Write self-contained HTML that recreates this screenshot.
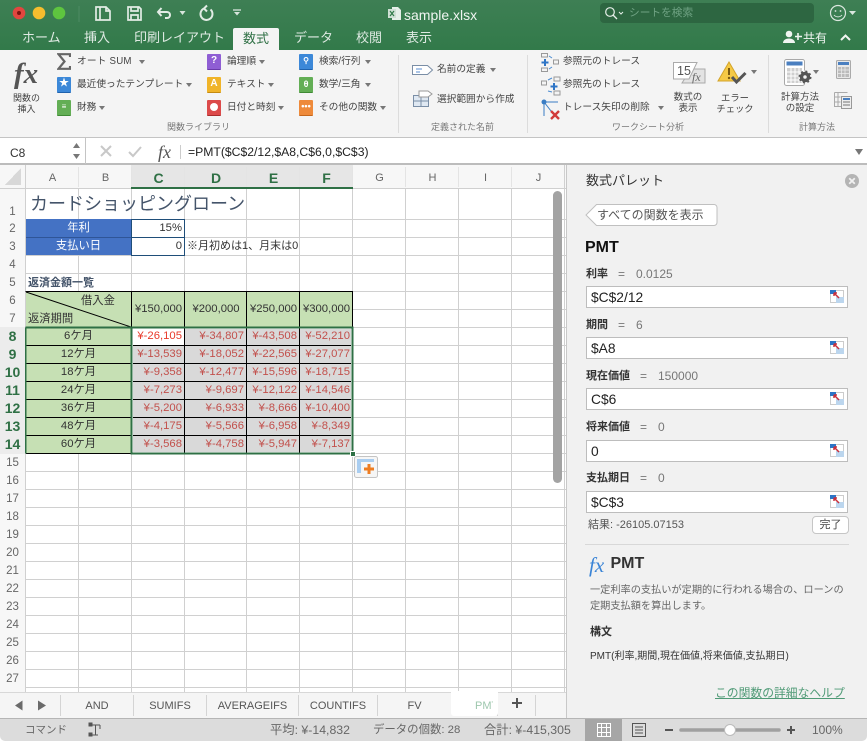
<!DOCTYPE html>
<html lang="ja"><head><meta charset="utf-8"><title>sample.xlsx</title>
<style>
*{box-sizing:border-box}
html,body{margin:0;padding:0;width:867px;height:741px;overflow:hidden;background:#fff}
body{font-family:"Liberation Sans","Noto Sans CJK JP",sans-serif;font-size:11px;color:#333;position:relative}
.a{position:absolute}
.t{position:absolute;white-space:nowrap;line-height:14px;height:14px}
.k{font-size:9.7px;color:#444}
.r{position:absolute;height:18px;line-height:18px;white-space:nowrap;text-align:right;padding-right:2px;font-size:11.3px}
.c{text-align:center;padding:0}
.tab{position:absolute;top:31px;line-height:14px;font-size:13px;color:#dfeae3;white-space:nowrap}
.lb{position:absolute;line-height:14px;font-size:9px;color:#777;white-space:nowrap}
.tri{position:absolute;width:0;height:0;border-left:3.5px solid transparent;border-right:3.5px solid transparent;border-top:4.500px solid #777}
.ic{position:absolute;width:14px;height:16px;border-radius:1px;color:#fff;text-align:center;font-size:10px;line-height:14px;font-weight:bold}
.h{position:absolute;top:168px;height:20px;line-height:20px;text-align:center;color:#666;font-size:11px}
.hs{color:#2f7045;font-weight:bold;font-size:14px}
.n{position:absolute;left:0;width:25px;text-align:center;height:18px;line-height:20px;color:#666;font-size:11.5px}
.ns{color:#2f7045;font-weight:bold;font-size:14px;line-height:18px}
.inp{position:absolute;left:586px;width:262px;height:22px;background:#fff;border:1px solid #bdbdbd;font-size:13.8px;line-height:21px;padding-left:4px;color:#222}
.pl{position:absolute;left:586px;font-weight:bold;font-size:11px;line-height:14px;color:#333;white-space:nowrap}
.pe{position:absolute;line-height:14px;font-size:12px;color:#777;white-space:nowrap}
.st{position:absolute;top:692px;height:26px;line-height:29px;text-align:center;font-size:11px;color:#555}
.sv{position:absolute;top:723px;line-height:14px;color:#666;font-size:12.3px;white-space:nowrap}
</style></head><body>

<!-- Title bar -->
<div class="a" style="left:0;top:0;width:867px;height:50px;background:linear-gradient(#3e7f54,#327a4a)"></div>
<svg class="a" style="left:0;top:0" width="867" height="50" fill="none">
<circle cx="19" cy="13" r="6.3" fill="#e2463f"/><circle cx="19" cy="13" r="2" fill="#7c1410"/>
<circle cx="39" cy="13" r="6.3" fill="#f5bd2e"/><circle cx="59" cy="13" r="6.3" fill="#5ec53f"/>
<path d="M79 6V22" stroke="#4d8b63"/>
<g stroke="#e2ece5" stroke-width="1.700">
<path d="M96 7h10l4 4v9H96zM100 7v13M106 7v4h4"/>
<path d="M128 7h11l2 2v11h-13zM131 7v4h7V7M131 20v-5h7v5"/>
<path d="M161.500 8l-3.500 4 3.500 4M158 12h9c4 0 4 6 0 6h-2" stroke-width="2"/>
<path d="M210.500 9.500A6 6 0 1 1 204 8.500M207 5.500l-3 3 3 3" stroke-width="2"/>
</g>
<path d="M179.500 11h6l-3 4zM234 12h6l-3 3.500z" fill="#d8e5dc"/><path d="M233 10h8" stroke="#d8e5dc" stroke-width="1.300"/>
<rect x="600" y="3" width="214" height="20" rx="4" fill="#2d6641"/>
<circle cx="610" cy="12" r="4.300" stroke="#e6efe9" stroke-width="1.200"/><path d="M613 15l4 4" stroke="#e6efe9" stroke-width="1.300"/><path d="M619 12l2 2 2-2" stroke="#e6efe9"/>
<circle cx="838" cy="13" r="7.500" stroke="#dbe7df" stroke-width="1.200"/><circle cx="835.500" cy="11" r=".9" fill="#dbe7df"/><circle cx="840.500" cy="11" r=".9" fill="#dbe7df"/><path d="M834 15c2 2.500 6 2.500 8 0" stroke="#dbe7df"/>
<path d="M849 11h7l-3.500 4z" fill="#dbe7df"/>
<path d="M392 7h6l3 3v10h-9z" fill="#e6efe9"/><rect x="388" y="9" width="8" height="9" fill="#cfe0d5"/><path d="M390 11l4 5M394 11l-4 5" stroke="#327a4a" stroke-width="1.200"/>
<circle cx="789" cy="34" r="3.300" fill="#f0f5f1"/><path d="M783 43c0-6 12-6 12 0z" fill="#f0f5f1"/><path d="M798 33v7M795 36.500h7" stroke="#f0f5f1" stroke-width="1.600"/>
<path d="M841 40l4.500-4.500L850 40" stroke="#f0f5f1" stroke-width="2"/>
</svg>
<div class="t" style="left:404px;top:8px;font-size:14px;color:#f0f5f1">sample.xlsx</div>
<div class="t" style="left:629px;top:6px;font-size:10.700px;color:#6fa283">シートを検索</div>
<div class="tab" style="left:22px">ホーム</div><div class="tab" style="left:84px">挿入</div><div class="tab" style="left:134px">印刷レイアウト</div>
<div class="a" style="left:233px;top:28px;width:46px;height:22px;background:#f4f4f4;border-radius:2px 2px 0 0;text-align:center;line-height:21px;font-size:13px;color:#2f7045">数式</div>
<div class="tab" style="left:294px">データ</div><div class="tab" style="left:356px">校閲</div><div class="tab" style="left:406px">表示</div>
<div class="t" style="left:803px;top:31px;font-size:12px;color:#f0f5f1">共有</div>

<!-- Ribbon -->
<div class="a" style="left:0;top:50px;width:867px;height:88px;background:#f4f4f4;border-bottom:1px solid #c4c4c4"></div>
<div class="a" style="left:398px;top:55px;width:1px;height:78px;background:#dcdcdc"></div>
<div class="a" style="left:527px;top:55px;width:1px;height:78px;background:#dcdcdc"></div>
<div class="a" style="left:768px;top:55px;width:1px;height:78px;background:#dcdcdc"></div>
<div class="t" style="left:14px;top:59px;font-family:'Liberation Serif',serif;font-style:italic;font-weight:bold;font-size:29px;line-height:30px;height:30px;color:#555">fx</div>
<div class="a" style="left:11px;top:93px;width:31px;text-align:center;line-height:10.500px;font-size:9px;color:#444">関数の<br>挿入</div>
<svg class="a" style="left:57px;top:53px" width="14" height="17"><path d="M13 4V1.200H1.500L7.500 8.500L1.500 15.800H13V13" fill="none" stroke="#666" stroke-width="2.200"/></svg>
<div class="t k" style="left:77px;top:55px;letter-spacing:.2px">オート SUM</div><div class="tri" style="left:139px;top:60px"></div>
<div class="ic" style="left:57px;top:77px;background:#3c88d8;border-bottom:1px solid #1f62ad">★</div>
<div class="t k" style="left:77px;top:78px">最近使ったテンプレート</div><div class="tri" style="left:186px;top:83px"></div>
<div class="ic" style="left:57px;top:100px;background:#63ae55;border-bottom:1px solid #3f8a35;font-size:8px">≡</div>
<div class="t k" style="left:77px;top:101px">財務</div><div class="tri" style="left:99px;top:106px"></div>
<div class="ic" style="left:207px;top:54px;background:#8f5ed4;border-bottom:1px solid #6a3aaa">?</div>
<div class="t k" style="left:227px;top:55px">論理順</div><div class="tri" style="left:259px;top:60px"></div>
<div class="ic" style="left:207px;top:77px;background:#f0b429;border-bottom:1px solid #c48a10">A</div>
<div class="t k" style="left:227px;top:78px">テキスト</div><div class="tri" style="left:268px;top:83px"></div>
<div class="ic" style="left:207px;top:100px;background:#dc4a4a;border-bottom:1px solid #a92c2c"><span style="display:block;width:8px;height:8px;background:#fff;border-radius:50%;margin:3px auto"></span></div>
<div class="t k" style="left:227px;top:101px">日付と時刻</div><div class="tri" style="left:278px;top:106px"></div>
<div class="ic" style="left:299px;top:54px;background:#3c88d8;border-bottom:1px solid #1f62ad;font-size:8px">⚲</div>
<div class="t k" style="left:319px;top:55px">検索/行列</div><div class="tri" style="left:365px;top:60px"></div>
<div class="ic" style="left:299px;top:77px;background:#63ae55;border-bottom:1px solid #3f8a35;font-size:9px">θ</div>
<div class="t k" style="left:319px;top:78px">数学/三角</div><div class="tri" style="left:365px;top:83px"></div>
<div class="ic" style="left:299px;top:100px;background:#ee8a3a;border-bottom:1px solid #c4661c;font-size:9px;line-height:12px">•••</div>
<div class="t k" style="left:319px;top:101px">その他の関数</div><div class="tri" style="left:380px;top:106px"></div>
<div class="lb" style="left:167px;top:120px">関数ライブラリ</div>

<svg class="a" style="left:411px;top:60px" width="24" height="50" fill="none" stroke="#7a8ea6"><path d="M1.500 5.500h15l5 4.500-5 4.500h-15z" fill="#fff"/><path d="M5 9h6M5 12h4" stroke="#5a8ed0"/><rect x="2.500" y="35.500" width="15" height="11" fill="#dfe8f2"/><path d="M2.500 41h15M10 35v11"/><path d="M8 31h9l4 3-4 3H8z" fill="#fff" stroke="#999"/></svg>
<div class="t k" style="left:437px;top:63px">名前の定義</div><div class="tri" style="left:490px;top:68px"></div>
<div class="t k" style="left:437px;top:93px">選択範囲から作成</div>
<div class="lb" style="left:431px;top:120px">定義された名前</div>

<svg class="a" style="left:541px;top:53px" width="20" height="68" fill="none">
<g stroke="#999"><rect x=".5" y=".5" width="6" height="3.500"/><rect x=".5" y="15" width="6" height="3.500"/><rect x="12.500" y="7" width="5" height="4"/><rect x=".5" y="28" width="5" height="4"/><rect x="13" y="24" width="6" height="4"/><rect x="13" y="38" width="6" height="4"/></g>
<path d="M4 6v7M.5 9.500h7M13 30v7M9.500 33.500h7" stroke="#2e75c6" stroke-width="2"/>
<path d="M8 3l3 2M8 16l3-2M7 27l4-2M7 38l4 1" stroke="#4a8bd0"/>
<circle cx="3" cy="49" r="2.500" fill="#3a7dc4"/><path d="M3 49h14M3 49v14" stroke="#3a7dc4"/><path d="M3 49l7 9" stroke="#3a7dc4"/>
<path d="M10 58l8 8M18 58l-8 8" stroke="#d13b3b" stroke-width="2.400"/></svg>
<div class="t k" style="left:563px;top:55px">参照元のトレース</div>
<div class="t k" style="left:563px;top:78px">参照先のトレース</div>
<div class="t k" style="left:563px;top:101px">トレース矢印の削除</div><div class="tri" style="left:658px;top:106px"></div>
<svg class="a" style="left:672px;top:60px" width="36" height="26" fill="none"><path d="M19 9h14v14H10z" fill="#e3e3e3" stroke="#aaa"/><path d="M1.500 2.500H25L17 19H1.500z" fill="#fff" stroke="#aaa"/><text x="5" y="15" font-size="12.500" fill="#555" font-family="Liberation Sans">15</text><text x="20" y="21" font-size="12" fill="#666" font-style="italic" font-family="Liberation Serif">fx</text></svg>
<div class="a" style="left:669px;top:93px;width:38px;text-align:center;line-height:10.500px;font-size:9.500px;color:#444">数式の<br>表示</div>
<svg class="a" style="left:717px;top:60px" width="34" height="28" fill="none"><path d="M12 2L1 21h22z" fill="#f5c945" stroke="#d3a42a"/><path d="M12 8v7" stroke="#7a5a10" stroke-width="2"/><circle cx="12" cy="18" r="1.200" fill="#7a5a10"/><path d="M15 17l4.500 5 9-9" stroke="#555" stroke-width="3"/></svg>
<div class="tri" style="left:751px;top:70px"></div>
<div class="a" style="left:711px;top:93px;width:48px;text-align:center;line-height:11px;font-size:9.300px;color:#444">エラー<br>チェック</div>
<svg class="a" style="left:783px;top:58px" width="84" height="54" fill="none">
<rect x="1.500" y="1.500" width="20" height="26" rx="2" fill="#fff" stroke="#a8a8a8"/><rect x="3.500" y="3.500" width="16" height="4" fill="#4a7fc0"/>
<path d="M4 10h15v15H4z" fill="#cfcfcf"/><path d="M8 10v15M12 10v15M16 10v15M4 14h15M4 18h15M4 22h15" stroke="#fff"/>
<circle cx="22" cy="19" r="6.500" fill="#f4f4f4"/><circle cx="22" cy="19" r="3.500" fill="none" stroke="#555" stroke-width="3.500"/><circle cx="22" cy="19" r="5.700" fill="none" stroke="#555" stroke-width="1.600" stroke-dasharray="2 2.500"/>
<rect x="53.500" y="2.500" width="14" height="18" rx="1" fill="#e8e8e8" stroke="#aaa"/><rect x="55" y="4" width="11" height="3" fill="#4a7fc0"/><path d="M55 9h11v10H55z" fill="#bbb"/><path d="M58.500 9v10M62 9v10M55 12h11M55 15.500h11" stroke="#eee" stroke-width=".7"/>
<path d="M51.500 34.500h13M51.500 34.500v14h7M55 35v13M51.500 39h6M51.500 44h6" stroke="#aaa"/><rect x="58.500" y="38.500" width="10" height="12" fill="#eee" stroke="#999"/><rect x="60" y="40" width="7" height="2" fill="#4a7fc0"/><path d="M60 44h7M60 47h7" stroke="#777"/>
</svg>
<div class="tri" style="left:813px;top:70px"></div>
<div class="a" style="left:776px;top:93px;width:48px;text-align:center;line-height:10.500px;font-size:9.500px;color:#444">計算方法<br>の設定</div>
<div class="lb" style="left:799px;top:120px">計算方法</div>
<div class="lb" style="left:612px;top:120px">ワークシート分析</div>

<!-- Formula bar -->
<div class="a" style="left:0;top:138px;width:867px;height:27px;background:#fff;border-bottom:2px solid #bcbcbc"></div>
<div class="a" style="left:85px;top:138px;width:1px;height:26px;background:#c4c4c4"></div>
<div class="t" style="left:10px;top:146px;font-size:12px;color:#333">C8</div>
<svg class="a" style="left:70px;top:141px" width="100" height="20" fill="none"><path d="M3 7l3.500-5L10 7zM3 13l3.500 5 3.500-5z" fill="#777"/><path d="M31 5l10 10M41 5L31 15" stroke="#c8c8c8" stroke-width="2"/><path d="M59 11l4 4 8-9" stroke="#c8c8c8" stroke-width="2"/></svg>
<div class="t" style="left:158px;top:144px;font-family:'Liberation Serif',serif;font-style:italic;font-size:18px;height:16px;line-height:16px;color:#555">fx</div>
<div class="a" style="left:180px;top:145px;width:1px;height:14px;background:#ccc"></div>
<div class="t" style="left:188px;top:145px;font-size:12.200px;color:#222;line-height:15px">=PMT($C$2/12,$A8,C$6,0,$C$3)</div>
<div class="tri" style="left:855px;top:149px;border-top-color:#777;border-left-width:4px;border-right-width:4px;border-top-width:6px"></div>

<!-- Sheet -->
<div class="a" style="left:0;top:165px;width:566px;height:527px;background:#fff"></div>
<svg class="a" style="left:0;top:165px" width="566" height="527" fill="none" shape-rendering="crispEdges">
<rect x="0" y="0" width="566" height="23" fill="#f7f7f7"/><rect x="0" y="0" width="25" height="527" fill="#f7f7f7"/>
<rect x="131" y="0" width="222" height="23" fill="#e6e6e6"/>
<rect x="0" y="162" width="25" height="127" fill="#ececec"/>
<g stroke="#d0d0d0">
<path d="M25.500 0V527M78.500 23V527M131.500 23V527M184.500 23V527M246.500 23V527M299.500 23V527M352.500 23V527M405.500 23V527M458.500 23V527M511.500 23V527M564.500 0V527"/>
<path d="M25 54.500H566M25 72.500H566M25 90.500H566M25 108.500H566M25 126.500H566M25 144.500H566M25 162.500H566M25 180.500H566M25 198.500H566M25 216.500H566M25 234.500H566M25 252.500H566M25 270.500H566M25 288.500H566M25 306.500H566M25 324.500H566M25 342.500H566M25 360.500H566M25 378.500H566M25 396.500H566M25 414.500H566M25 432.500H566M25 450.500H566M25 468.500H566M25 486.500H566M25 504.500H566M25 522.500H566"/>
<path d="M0 23.500H566"/>
</g>
<g stroke="#e4e4e4"><path d="M78.500 2V22M131.500 2V22M184.500 2V22M246.500 2V22M299.500 2V22M352.500 2V22M405.500 2V22M458.500 2V22M511.500 2V22"/></g>
<path d="M21 3v17H5z" fill="#d8d8d8"/>
<rect x="131" y="22" width="222" height="2" fill="#2f7045"/>
</svg>
<div class="a" style="left:553px;top:191px;width:9px;height:292px;background:#a3a3a3;border-radius:5px"></div>
<div class="h" style="left:26px;width:53px">A</div><div class="h" style="left:79px;width:53px">B</div>
<div class="h hs" style="left:132px;width:53px">C</div><div class="h hs" style="left:185px;width:62px">D</div><div class="h hs" style="left:247px;width:53px">E</div><div class="h hs" style="left:300px;width:53px">F</div>
<div class="h" style="left:353px;width:53px">G</div><div class="h" style="left:406px;width:53px">H</div><div class="h" style="left:459px;width:53px">I</div><div class="h" style="left:512px;width:53px">J</div>

<div class="n" style="top:202px">1</div><div class="n" style="top:219px">2</div><div class="n" style="top:237px">3</div><div class="n" style="top:255px">4</div><div class="n" style="top:273px">5</div><div class="n" style="top:291px">6</div><div class="n" style="top:309px">7</div>
<div class="n ns" style="top:327px">8</div><div class="n ns" style="top:345px">9</div><div class="n ns" style="top:363px">10</div><div class="n ns" style="top:381px">11</div><div class="n ns" style="top:399px">12</div><div class="n ns" style="top:417px">13</div><div class="n ns" style="top:435px">14</div>
<div class="n" style="top:453px">15</div><div class="n" style="top:471px">16</div><div class="n" style="top:489px">17</div><div class="n" style="top:507px">18</div><div class="n" style="top:525px">19</div><div class="n" style="top:543px">20</div><div class="n" style="top:561px">21</div><div class="n" style="top:579px">22</div><div class="n" style="top:597px">23</div><div class="n" style="top:615px">24</div><div class="n" style="top:633px">25</div><div class="n" style="top:651px">26</div><div class="n" style="top:669px">27</div>

<div class="t" style="left:30px;top:193px;height:22px;line-height:22px;font-size:18px;color:#44546a">カードショッピングローン</div>
<div class="a" style="left:26px;top:219px;width:105px;height:36px;background:#4472c4"></div>
<div class="a" style="left:26px;top:237px;width:105px;height:1px;background:#2f5597"></div>
<div class="r c" style="left:26px;top:219px;width:105px;color:#fff">年利</div>
<div class="r c" style="left:26px;top:237px;width:105px;color:#fff">支払い日</div>
<div class="a" style="left:131px;top:219px;width:54px;height:37px;border:1px solid #1f4e79"></div>
<div class="a" style="left:132px;top:237px;width:52px;height:1px;background:#1f4e79"></div>
<div class="r" style="left:131px;top:219px;width:53px;color:#333">15%</div>
<div class="r" style="left:131px;top:237px;width:53px;color:#333">0</div>
<div class="t" style="left:187px;top:239px;font-size:11px;color:#333">※月初めは1、月末は0</div>
<div class="t" style="left:28px;top:276px;font-weight:bold;color:#44546a">返済金額一覧</div>

<!-- table -->
<div class="a" style="left:26px;top:291px;width:327px;height:162px;background:#c6e0b4"></div>
<div class="a" style="left:132px;top:328px;width:220px;height:125px;background:#fff"></div>
<div class="a" style="left:133px;top:329px;width:218px;height:123px;background:#d9d9d9"></div>
<div class="a" style="left:133px;top:329px;width:51px;height:16px;background:#fff"></div>
<svg class="a" style="left:25px;top:291px" width="330" height="164" fill="none" shape-rendering="crispEdges">
<g stroke="#000"><path d="M.5 .5H328M.5 36.500H328M106.500 0V36M159.500 0V162M221.500 0V162M274.500 0V162M327.500 0V36"/>
<path d="M1 54.500H106M1 72.500H106M1 90.500H106M1 108.500H106M1 126.500H106M1 144.500H106M1 162.500H106M108 54.500H326M108 72.500H326M108 90.500H326M108 108.500H326M108 126.500H326M108 144.500H326"/></g>
<path d="M1 1L106 36" stroke="#000" shape-rendering="auto"/>
<rect x="106.500" y="36.500" width="221" height="126" stroke="#2f7045" stroke-width="2"/>
<path d="M.5 36.500V162.500M.5 36.500H106" stroke="#2f7045" stroke-width="2"/>
</svg>
<div class="a" style="left:350px;top:451px;width:6px;height:6px;background:#2f7045;border:1px solid #fff"></div>
<div class="t" style="left:81px;top:294px;font-size:11.300px;color:#333">借入金</div>
<div class="t" style="left:28px;top:312px;font-size:11.300px;color:#333">返済期間</div>
<div class="r c" style="left:132px;top:300px;width:53px;color:#333">¥150,000</div><div class="r c" style="left:185px;top:300px;width:62px;color:#333">¥200,000</div><div class="r c" style="left:247px;top:300px;width:53px;color:#333">¥250,000</div><div class="r c" style="left:300px;top:300px;width:53px;color:#333">¥300,000</div>

<div class="r c" style="left:26px;top:327px;width:105px;color:#333">6ケ月</div><div class="r c" style="left:26px;top:345px;width:105px;color:#333">12ケ月</div><div class="r c" style="left:26px;top:363px;width:105px;color:#333">18ケ月</div><div class="r c" style="left:26px;top:381px;width:105px;color:#333">24ケ月</div><div class="r c" style="left:26px;top:399px;width:105px;color:#333">36ケ月</div><div class="r c" style="left:26px;top:417px;width:105px;color:#333">48ケ月</div><div class="r c" style="left:26px;top:435px;width:105px;color:#333">60ケ月</div>

<div style="color:#c2504c">
<div class="r" style="left:131px;top:327px;width:53px;color:#e83a2a">¥-26,105</div><div class="r" style="left:185px;top:327px;width:61px">¥-34,807</div><div class="r" style="left:247px;top:327px;width:52px">¥-43,508</div><div class="r" style="left:300px;top:327px;width:52px">¥-52,210</div>
<div class="r" style="left:131px;top:345px;width:53px">¥-13,539</div><div class="r" style="left:185px;top:345px;width:61px">¥-18,052</div><div class="r" style="left:247px;top:345px;width:52px">¥-22,565</div><div class="r" style="left:300px;top:345px;width:52px">¥-27,077</div>
<div class="r" style="left:131px;top:363px;width:53px">¥-9,358</div><div class="r" style="left:185px;top:363px;width:61px">¥-12,477</div><div class="r" style="left:247px;top:363px;width:52px">¥-15,596</div><div class="r" style="left:300px;top:363px;width:52px">¥-18,715</div>
<div class="r" style="left:131px;top:381px;width:53px">¥-7,273</div><div class="r" style="left:185px;top:381px;width:61px">¥-9,697</div><div class="r" style="left:247px;top:381px;width:52px">¥-12,122</div><div class="r" style="left:300px;top:381px;width:52px">¥-14,546</div>
<div class="r" style="left:131px;top:399px;width:53px">¥-5,200</div><div class="r" style="left:185px;top:399px;width:61px">¥-6,933</div><div class="r" style="left:247px;top:399px;width:52px">¥-8,666</div><div class="r" style="left:300px;top:399px;width:52px">¥-10,400</div>
<div class="r" style="left:131px;top:417px;width:53px">¥-4,175</div><div class="r" style="left:185px;top:417px;width:61px">¥-5,566</div><div class="r" style="left:247px;top:417px;width:52px">¥-6,958</div><div class="r" style="left:300px;top:417px;width:52px">¥-8,349</div>
<div class="r" style="left:131px;top:435px;width:53px">¥-3,568</div><div class="r" style="left:185px;top:435px;width:61px">¥-4,758</div><div class="r" style="left:247px;top:435px;width:52px">¥-5,947</div><div class="r" style="left:300px;top:435px;width:52px">¥-7,137</div>
</div>
<svg class="a" style="left:354px;top:456px" width="24" height="22" fill="none"><rect x=".5" y=".5" width="23" height="21" rx="2" fill="#f6f6f6" stroke="#c4c4c4"/><path d="M3 3h17v3H7v11H3z" fill="#a9cdf0"/><path d="M15 8v10M10 13h10" stroke="#ee7d22" stroke-width="3"/></svg>

<!-- Panel -->
<div class="a" style="left:566px;top:165px;width:301px;height:553px;background:#f1f1f1;border-left:1px solid #c8c8c8"></div>
<div class="t" style="left:586px;top:174px;font-size:13px;color:#333">数式パレット</div>
<svg class="a" style="left:844px;top:173px" width="16" height="16"><circle cx="8" cy="8" r="7" fill="#b4b4b4"/><path d="M5.200 5.200l5.600 5.600M10.800 5.200l-5.600 5.600" stroke="#f1f1f1" stroke-width="1.800"/></svg>
<svg class="a" style="left:585px;top:204px" width="133" height="22" fill="none"><path d="M11.500 .5H129a3 3 0 0 1 3 3v15a3 3 0 0 1-3 3H11.500L1 11z" fill="#fff" stroke="#c0c0c0"/></svg>
<div class="t" style="left:597px;top:208px;font-size:12px;color:#555">すべての関数を表示</div>
<div class="t" style="left:585px;top:239px;font-size:16px;line-height:17px;height:17px;font-weight:bold;color:#111">PMT</div>

<div class="pl" style="top:267px">利率</div><div class="pe" style="left:618px;top:267px">=</div><div class="pe" style="left:636px;top:267px">0.0125</div>
<div class="inp" style="top:286px">$C$2/12</div>
<div class="pl" style="top:318px">期間</div><div class="pe" style="left:618px;top:318px">=</div><div class="pe" style="left:636px;top:318px">6</div>
<div class="inp" style="top:337px">$A8</div>
<div class="pl" style="top:369px">現在価値</div><div class="pe" style="left:640px;top:369px">=</div><div class="pe" style="left:658px;top:369px">150000</div>
<div class="inp" style="top:388px">C$6</div>
<div class="pl" style="top:420px">将来価値</div><div class="pe" style="left:640px;top:420px">=</div><div class="pe" style="left:658px;top:420px">0</div>
<div class="inp" style="top:440px">0</div>
<div class="pl" style="top:471px">支払期日</div><div class="pe" style="left:640px;top:471px">=</div><div class="pe" style="left:658px;top:471px">0</div>
<div class="inp" style="top:491px">$C$3</div>
<svg class="a" style="left:830px;top:290px" width="16" height="220" fill="none">
<g id="rf"><rect x=".5" y=".5" width="13" height="12" fill="#fff" stroke="#ccc"/><rect x="0" y="0" width="6" height="4" fill="#2e75c6"/><rect x="6" y="7" width="8" height="6" fill="#bcd6ee"/><path d="M4 3l5 5M4 3h3M4 3v3" stroke="#c8303c" stroke-width="1.500"/></g>
<use href="#rf" y="51"/><use href="#rf" y="102"/><use href="#rf" y="154"/><use href="#rf" y="205"/>
</svg>
<div class="t" style="left:588px;top:518px;color:#555">結果: -26105.07153</div>
<div class="a" style="left:812px;top:516px;width:37px;height:18px;background:#fff;border:1px solid #c6c6c6;border-radius:4px;text-align:center;line-height:16px;color:#444">完了</div>
<div class="a" style="left:585px;top:544px;width:264px;height:1px;background:#d8d8d8"></div>
<div class="t" style="left:589px;top:554px;height:22px;line-height:22px;font-family:'Liberation Serif',serif;font-style:italic;font-size:21px;color:#3a84d6">fx</div>
<div class="t" style="left:610.500px;top:556px;font-size:16px;line-height:16px;height:16px;font-weight:bold;color:#333">PMT</div>
<div class="t" style="left:590px;top:584px;font-size:10.200px;color:#666">一定利率の支払いが定期的に行われる場合の、ローンの</div>
<div class="t" style="left:590px;top:600px;font-size:10.200px;color:#666">定期支払額を算出します。</div>
<div class="t" style="left:590px;top:625px;font-weight:bold;color:#333">構文</div>
<div class="t" style="left:590px;top:650px;font-size:10px;color:#333">PMT(利率,期間,現在価値,将来価値,支払期日)</div>
<div class="t" style="left:715px;top:686px;font-size:11.800px;color:#4f9a76;text-decoration:underline">この関数の詳細なヘルプ</div>

<!-- Tabs -->
<div class="a" style="left:0;top:692px;width:566px;height:26px;background:#f5f5f5;border-top:1px solid #d8d8d8"></div>
<svg class="a" style="left:0;top:692px" width="566" height="26" fill="none" shape-rendering="crispEdges"><path d="M60.500 3V24M133.500 3V24M206.500 3V24M298.500 3V24M377.500 3V24M497.500 3V24M535.500 3V24" stroke="#d4d4d4"/><path d="M15 13.500L22.500 8.500V18.500zM38 8.500L46 13.500L38 18.500z" fill="#6a6a6a" shape-rendering="auto"/><path d="M517 6v10M512 11h10" stroke="#555" stroke-width="2"/></svg>
<div class="a" style="left:451px;top:691px;width:47px;height:25px;background:#fff;border-radius:0 0 3px 3px"></div>
<div class="st" style="left:61px;width:72px">AND</div><div class="st" style="left:134px;width:72px">SUMIFS</div><div class="st" style="left:207px;width:91px">AVERAGEIFS</div><div class="st" style="left:299px;width:78px">COUNTIFS</div><div class="st" style="left:378px;width:73px">FV</div>
<div class="st" style="left:475px;text-align:left;width:18px;overflow:hidden;color:#9ec7ae">PMT</div>

<!-- Status -->
<div class="a" style="left:0;top:718px;width:867px;height:23px;background:#dcdcdc;border-top:1px solid #b5b5b5;border-radius:0 0 5px 5px"></div>
<div class="sv" style="left:25px;font-size:10.500px">コマンド</div>
<svg class="a" style="left:88px;top:722px" width="15" height="15" fill="none" stroke="#555"><path d="M3 3h9M7.500 3v10M12 3v4M3 13h7"/><rect x="1" y="1" width="3" height="3" fill="#555"/><rect x="1" y="11" width="3" height="3" fill="#555"/></svg>
<div class="sv" style="left:270px">平均: ¥-14,832</div><div class="sv" style="left:373px;font-size:11.400px">データの個数: 28</div><div class="sv" style="left:484px">合計: ¥-415,305</div>
<div class="a" style="left:585px;top:719px;width:37px;height:22px;background:#a6a6a6"></div>
<svg class="a" style="left:596px;top:719px" width="250" height="22" fill="none">
<path d="M1.500 4.500h13v13h-13zM5.500 4.500v13M10.500 4.500v13M1.500 8.500h13M1.500 13.500h13" stroke="#fff"/>
<path d="M36.500 4.500h13v13h-13zM39 8h8M39 11h8M39 14h8" stroke="#555"/>
<path d="M69 11h8" stroke="#555" stroke-width="2"/>
<path d="M85 11h98" stroke="#a0a0a0" stroke-width="3.500" stroke-linecap="round"/>
<circle cx="134" cy="11" r="5.500" fill="#fff" stroke="#bbb"/>
<path d="M191 11h8M195 7v8" stroke="#555" stroke-width="2"/>
</svg>
<div class="sv" style="left:812px;font-size:12px">100%</div>
</body></html>
